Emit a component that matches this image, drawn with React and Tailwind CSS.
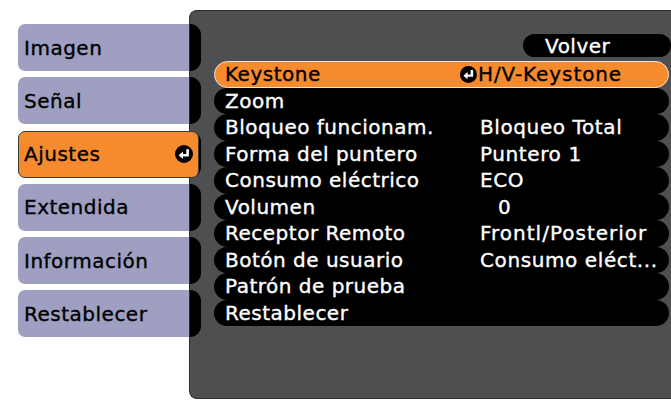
import React from "react";

const font = { fontFamily: '"DejaVu Sans", "Liberation Sans", sans-serif' };

function EnterIcon({ size = 18 }) {
  return (
    <svg width={size} height={size} viewBox="0 0 18 18" className="shrink-0">
      <circle cx="9" cy="9" r="9" fill="#000" />
      <path d="M12.6 4.2 V10.2 H7.2" stroke="#fff" strokeWidth="2.6" fill="none" />
      <polygon points="3.6,10.2 8,6.4 8,14" fill="#fff" />
    </svg>
  );
}

const tabs = ["Imagen", "Señal", "Ajustes", "Extendida", "Información", "Restablecer"];

const rows = [
  ["Zoom", ""],
  ["Bloqueo funcionam.", "Bloqueo Total"],
  ["Forma del puntero", "Puntero 1"],
  ["Consumo eléctrico", "ECO"],
  ["Volumen", "0"],
  ["Receptor Remoto", "Frontl/Posterior"],
  ["Botón de usuario", "Consumo eléct..."],
  ["Patrón de prueba", ""],
  ["Restablecer", ""],
];

export default function App() {
  return (
    <div
      className="w-[671px] h-[401px] bg-white flex overflow-hidden text-[20px] tracking-[0.5px] [-webkit-text-stroke:0.35px]"
      style={font}
    >
      <div className="w-[189px] shrink-0 pl-[18px] pt-[24px] flex flex-col gap-[6.25px]">
        {tabs.map((t) =>
          t === "Ajustes" ? (
            <div
              key={t}
              className="relative z-10 w-[181px] h-[47px] bg-[#f68b2e] border border-[#3c3c3c] rounded-[7px] flex items-center justify-between pl-[5px] pr-[5px] text-black leading-none"
            >
              <span>{t}</span>
              <EnterIcon />
            </div>
          ) : (
            <div
              key={t}
              className="w-full h-[47px] bg-[#9e9fc1] rounded-l-[7px] flex items-center pl-[6px] text-black leading-none"
            >
              {t}
            </div>
          )
        )}
      </div>

      <div className="flex-1 mt-[10px] h-[389px] bg-[#4e4f51] border-l border-t border-b border-[#2c2c2c] rounded-l-[8px] flex">
        <div className="w-[11px] shrink-0 pt-[13px] flex flex-col gap-[6.25px]">
          {tabs.map((t) => (
            <div key={t} className="h-[47px] bg-black rounded-r-[12px]" />
          ))}
        </div>

        <div className="flex-1 pl-[13px] pr-[2px] pt-[23px] flex flex-col">
          <div className="flex justify-end">
            <div className="w-[148px] h-[23px] mr-[-2px] bg-black rounded-full flex items-center pl-[22px] text-white leading-none">
              Volver
            </div>
          </div>

          <div className="mt-[4px] h-[26.5px] bg-[#f68b2e] border border-[#ece6df] rounded-full flex items-center pl-[10px] text-black leading-none whitespace-nowrap">
            <span className="w-[235px] shrink-0">Keystone</span>
            <span className="flex items-center tracking-[0.9px]">
              <EnterIcon size={17} />
              <span className="ml-[1px]">H/V-Keystone</span>
            </span>
          </div>

          {rows.map(([label, value]) => (
            <div
              key={label}
              className="h-[26.5px] bg-black rounded-full flex items-center pl-[11px] text-white leading-none whitespace-nowrap"
            >
              <span className="w-[255px] shrink-0">{label}</span>
              <span
                className={
                  value === "0"
                    ? "ml-[18px]"
                    : value === "Frontl/Posterior"
                    ? "tracking-[1px]"
                    : "tracking-[0.6px]"
                }
              >
                {value}
              </span>
            </div>
          ))}
        </div>
      </div>
    </div>
  );
}
